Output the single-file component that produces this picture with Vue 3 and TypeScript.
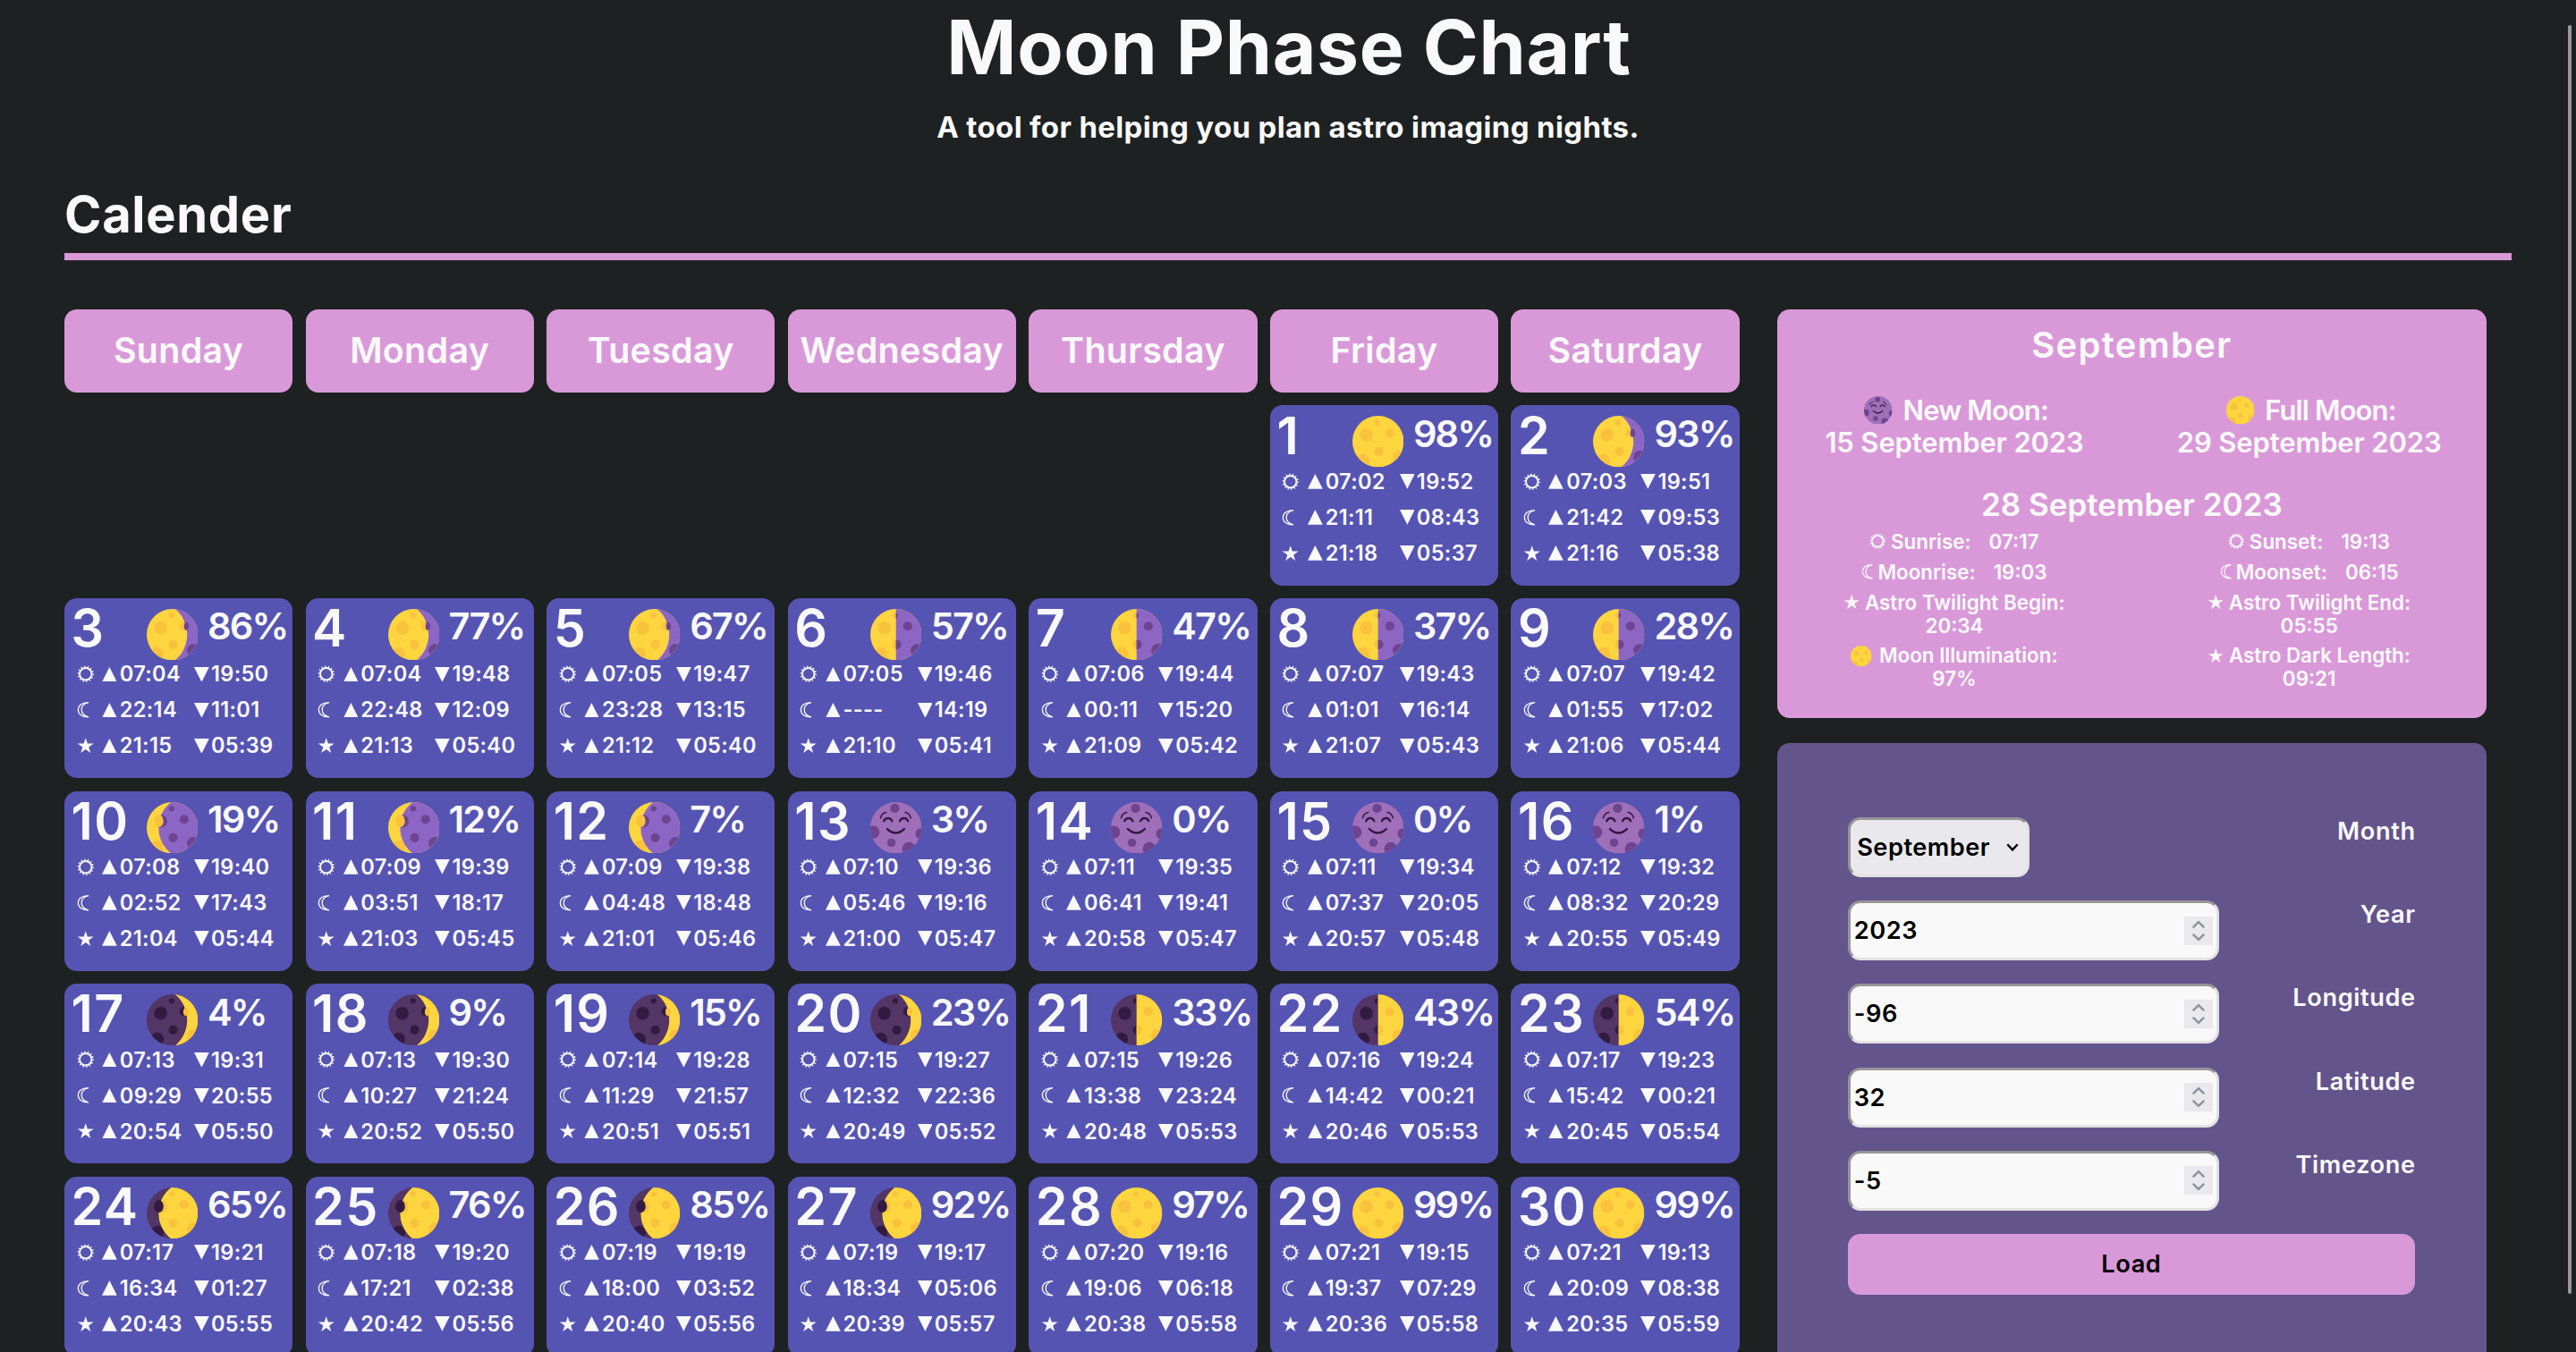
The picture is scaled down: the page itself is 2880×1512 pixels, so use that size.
<script setup lang="ts">
import { reactive } from 'vue'

type Phase = 'full' | 'new' | 'gibbous' | 'half' | 'crescent' | 'waxCrescent' | 'waxHalf' | 'waxGibbous'
type Glyph = 'sun' | 'moon' | 'star'

interface Day {
  date: number
  illumination: string
  phase: Phase
  rows: { glyph: Glyph; rise: string; set: string }[]
}

const weekdays = ['Sunday', 'Monday', 'Tuesday', 'Wednesday', 'Thursday', 'Friday', 'Saturday']

// date | illumination | sunrise sunset | moonrise moonset | twilight end, twilight begin
const table = `1 98% 07:02 19:52 21:11 08:43 21:18 05:37
2 93% 07:03 19:51 21:42 09:53 21:16 05:38
3 86% 07:04 19:50 22:14 11:01 21:15 05:39
4 77% 07:04 19:48 22:48 12:09 21:13 05:40
5 67% 07:05 19:47 23:28 13:15 21:12 05:40
6 57% 07:05 19:46 ---- 14:19 21:10 05:41
7 47% 07:06 19:44 00:11 15:20 21:09 05:42
8 37% 07:07 19:43 01:01 16:14 21:07 05:43
9 28% 07:07 19:42 01:55 17:02 21:06 05:44
10 19% 07:08 19:40 02:52 17:43 21:04 05:44
11 12% 07:09 19:39 03:51 18:17 21:03 05:45
12 7% 07:09 19:38 04:48 18:48 21:01 05:46
13 3% 07:10 19:36 05:46 19:16 21:00 05:47
14 0% 07:11 19:35 06:41 19:41 20:58 05:47
15 0% 07:11 19:34 07:37 20:05 20:57 05:48
16 1% 07:12 19:32 08:32 20:29 20:55 05:49
17 4% 07:13 19:31 09:29 20:55 20:54 05:50
18 9% 07:13 19:30 10:27 21:24 20:52 05:50
19 15% 07:14 19:28 11:29 21:57 20:51 05:51
20 23% 07:15 19:27 12:32 22:36 20:49 05:52
21 33% 07:15 19:26 13:38 23:24 20:48 05:53
22 43% 07:16 19:24 14:42 00:21 20:46 05:53
23 54% 07:17 19:23 15:42 00:21 20:45 05:54
24 65% 07:17 19:21 16:34 01:27 20:43 05:55
25 76% 07:18 19:20 17:21 02:38 20:42 05:56
26 85% 07:19 19:19 18:00 03:52 20:40 05:56
27 92% 07:19 19:17 18:34 05:06 20:39 05:57
28 97% 07:20 19:16 19:06 06:18 20:38 05:58
29 99% 07:21 19:15 19:37 07:29 20:36 05:58
30 99% 07:21 19:13 20:09 08:38 20:35 05:59`

function phaseOf(date: number): Phase {
  if (date === 1 || date >= 28) return 'full'
  if (date <= 5) return 'gibbous'
  if (date <= 9) return 'half'
  if (date <= 12) return 'crescent'
  if (date <= 16) return 'new'
  if (date <= 20) return 'waxCrescent'
  if (date <= 23) return 'waxHalf'
  return 'waxGibbous'
}

const days: Day[] = table.split('\n').map((line) => {
  const [date, illumination, ...t] = line.split(' ')
  const glyphs: Glyph[] = ['sun', 'moon', 'star']
  return {
    date: Number(date),
    illumination,
    phase: phaseOf(Number(date)),
    rows: glyphs.map((glyph, i) => ({ glyph, rise: t[i * 2], set: t[i * 2 + 1] })),
  }
})

const left: { glyph: Glyph | 'full'; label: string; value: string; stacked?: boolean }[] = [
  { glyph: 'sun', label: 'Sunrise:', value: '07:17' },
  { glyph: 'moon', label: 'Moonrise:', value: '19:03' },
  { glyph: 'star', label: 'Astro Twilight Begin:', value: '20:34', stacked: true },
  { glyph: 'full', label: 'Moon Illumination:', value: '97%', stacked: true },
]
const right: typeof left = [
  { glyph: 'sun', label: 'Sunset:', value: '19:13' },
  { glyph: 'moon', label: 'Moonset:', value: '06:15' },
  { glyph: 'star', label: 'Astro Twilight End:', value: '05:55', stacked: true },
  { glyph: 'star', label: 'Astro Dark Length:', value: '09:21', stacked: true },
]

const months = ['January', 'February', 'March', 'April', 'May', 'June', 'July', 'August', 'September', 'October', 'November', 'December']
const form = reactive({ month: 'September' })
const fields = reactive([
  { label: 'Year', value: '2023' },
  { label: 'Longitude', value: '-96' },
  { label: 'Latitude', value: '32' },
  { label: 'Timezone', value: '-5' },
])
</script>

<template>
  <div class="page">
    <svg class="defs" aria-hidden="true">
      <defs>
        <clipPath id="disc"><circle cx="50" cy="50" r="50" /></clipPath>
        <clipPath id="cut-wide"><path d="M54 -1 A64.8 64.8 0 0 1 54 101 L101 101 V-1 Z" /></clipPath>
        <clipPath id="cut-half"><path d="M50 -1 H101 V101 H50 Z" /></clipPath>
        <clipPath id="cut-thin"><path d="M49 -1 A63.3 63.3 0 0 0 49 101 L101 101 V-1 Z" /></clipPath>
        <g id="craters">
          <circle cx="27.2" cy="37" r="12.7" /><circle cx="48.5" cy="12.7" r="5.5" />
          <circle cx="72.8" cy="33.5" r="8.8" /><circle cx="51.5" cy="69.4" r="8.8" />
          <circle cx="91" cy="80.5" r="12.5" /><circle cx="20.6" cy="87.3" r="12.7" />
        </g>
        <g id="ph-full" clip-path="url(#disc)">
          <rect width="100" height="100" fill="#fdd53f" /><use href="#craters" fill="#f9c23c" />
        </g>
        <g id="ph-lilac" clip-path="url(#disc)">
          <rect width="100" height="100" fill="#8d65c5" /><use href="#craters" fill="#6d4490" />
        </g>
        <g id="ph-dark" clip-path="url(#disc)">
          <rect width="100" height="100" fill="#533566" /><use href="#craters" fill="#321b41" />
        </g>
        <g id="ph-gibbous">
          <use href="#ph-full" /><g clip-path="url(#cut-wide)"><use href="#ph-lilac" /></g>
          <ellipse cx="77.3" cy="33.8" rx="4.6" ry="7.4" fill="#6d4490" />
        </g>
        <g id="ph-half">
          <use href="#ph-full" /><g clip-path="url(#cut-half)"><use href="#ph-lilac" /></g>
        </g>
        <g id="ph-crescent">
          <use href="#ph-full" /><g clip-path="url(#cut-thin)"><use href="#ph-lilac" /></g>
          <ellipse cx="23.6" cy="37" rx="9" ry="12" fill="#f9c23c" />
        </g>
        <g id="ph-waxCrescent">
          <use href="#ph-dark" /><g clip-path="url(#cut-wide)"><use href="#ph-full" /></g>
          <ellipse cx="76.6" cy="34" rx="5.2" ry="8" fill="#f9c23c" />
        </g>
        <g id="ph-waxHalf">
          <use href="#ph-dark" /><g clip-path="url(#cut-half)"><use href="#ph-full" /></g>
        </g>
        <g id="ph-waxGibbous">
          <use href="#ph-dark" /><g clip-path="url(#cut-thin)"><use href="#ph-full" /></g>
          <ellipse cx="23.6" cy="37" rx="9.2" ry="12" fill="#321b41" />
        </g>
        <g id="ph-new">
          <g clip-path="url(#disc)">
            <rect width="100" height="100" fill="#a06fb9" />
            <g fill="#6d4490">
              <circle cx="48" cy="12" r="9" /><circle cx="5.5" cy="58.5" r="12.5" /><circle cx="41" cy="79" r="8.2" />
              <circle cx="75" cy="91" r="13" /><ellipse cx="97" cy="62" rx="9" ry="10.5" />
            </g>
          </g>
          <g fill="none" stroke="#321b41" stroke-linecap="round">
            <path stroke-width="2.8" d="M20 31 Q22 21.5 31 20 M68 20 Q77 21.5 79 31" />
            <path stroke-width="4.2" d="M26.5 37 Q29 31.5 34.5 31.5 T42.5 37 M57.5 37 Q60 31.5 65.5 31.5 T73.5 37 M33 52.5 Q49.5 68 66 52.5" />
          </g>
        </g>
        <g id="g-sun" fill="none" stroke="#f9f9f9">
          <circle cx="10" cy="10" r="6.9" stroke-width="2" />
          <circle cx="10" cy="10" r="8.6" stroke-width="1.7" stroke-dasharray="1.35 2.51" />
        </g>
        <g id="g-moon" fill="none" stroke="#f9f9f9" stroke-width="1.3">
          <path d="M13.4 1.7 C-2.6 1.2 -2.6 18.8 13.4 18.3 M13.4 1.7 C2.6 4.2 2.6 15.8 13.4 18.3" />
        </g>
        <path id="g-star" fill="#f9f9f9" d="M10 1.2 L12.15 7.75 H19.2 L13.5 11.75 L15.65 18.4 L10 14.3 L4.35 18.4 L6.5 11.75 L0.8 7.75 H7.85 Z" />
      </defs>
    </svg>

    <header class="masthead">
      <h1>Moon Phase Chart</h1>
      <p>A tool for helping you plan astro imaging nights.</p>
    </header>

    <h2>Calender</h2>

    <main>
      <section class="calendar">
        <div v-for="name in weekdays" :key="name" class="weekday">{{ name }}</div>
        <article v-for="day in days" :key="day.date" class="day" :class="{ first: day.date === 1 }">
          <div class="head">
            <span class="date">{{ day.date }}</span>
            <svg class="phase" viewBox="0 0 100 100"><use :href="'#ph-' + day.phase" /></svg>
            <span class="percent">{{ day.illumination }}</span>
          </div>
          <div v-for="row in day.rows" :key="row.glyph" class="row">
            <svg class="glyph" viewBox="0 0 20 20"><use :href="'#g-' + row.glyph" /></svg>
            <svg class="tri" viewBox="0 0 17 17"><path d="M8.5 0 L17 17 H0 Z" /></svg>
            <span>{{ row.rise }}</span>
            <svg class="tri" viewBox="0 0 17 17"><path d="M8.5 17 L17 0 H0 Z" /></svg>
            <span>{{ row.set }}</span>
          </div>
        </article>
      </section>

      <aside>
        <section class="summary">
          <h3>September</h3>
          <div class="pair events">
            <div>
              <div class="event"><svg viewBox="0 0 100 100"><use href="#ph-new" /></svg>New Moon:</div>
              <div class="when">15 September 2023</div>
            </div>
            <div>
              <div class="event"><svg viewBox="0 0 100 100"><use href="#ph-full" /></svg>Full Moon:</div>
              <div class="when">29 September 2023</div>
            </div>
          </div>
          <h4>28 September 2023</h4>
          <div class="pair">
            <div v-for="(column, i) in [left, right]" :key="i" class="details">
              <div v-for="item in column" :key="item.label" class="detail" :class="{ stacked: item.stacked }">
                <div class="label">
                  <svg v-if="item.glyph === 'full'" class="orb" viewBox="0 0 100 100"><use href="#ph-full" /></svg>
                  <svg v-else :class="['mark', item.glyph]" :viewBox="item.glyph === 'moon' ? '0 0 14 20' : '0 0 20 20'"><use :href="'#g-' + item.glyph" /></svg>
                  {{ item.label }}
                </div>
                <div>{{ item.value }}</div>
              </div>
            </div>
          </div>
        </section>

        <form class="settings" @submit.prevent>
          <div class="field">
            <div class="control select">
              <select id="month" v-model="form.month">
                <option v-for="m in months" :key="m">{{ m }}</option>
              </select>
              <svg class="chevron" viewBox="0 0 14 9"><path d="M1.3 1.2 L7 7.4 L12.7 1.2" /></svg>
            </div>
            <label for="month">Month</label>
          </div>
          <div v-for="field in fields" :key="field.label" class="field">
            <div class="control">
              <input :id="field.label" v-model="field.value" inputmode="numeric" />
              <span class="spinner">
                <svg viewBox="0 0 32 32"><path d="M10.4 11.6 L16 6.2 L21.6 11.6 M10.4 20.4 L16 25.8 L21.6 20.4" /></svg>
              </span>
            </div>
            <label :for="field.label">{{ field.label }}</label>
          </div>
          <button type="submit">Load</button>
        </form>
      </aside>
    </main>

    <div class="scrollbar"></div>
  </div>
</template>

<style>
body {
  margin: 0;
  background: #1e2122;
  overflow: hidden;
}
</style>

<style scoped>
* {
  box-sizing: border-box;
}
.page {
  position: relative;
  height: 1512px;
  overflow: hidden;
  padding: 2.7px 72px 0;
  background: #1e2122;
  color: #f9f9f9;
  font-family: Inter, 'Liberation Sans', sans-serif;
  font-weight: 600;
}
.defs {
  position: absolute;
  width: 0;
  height: 0;
}
h1,
h2,
h3,
h4,
p {
  margin: 0;
  white-space: nowrap;
}
.masthead {
  text-align: center;
}
h1 {
  padding-left: 2px;
  font-size: 84px;
  line-height: 100px;
  letter-spacing: 0.6px;
}
.masthead p {
  margin-top: 19.4px;
  font-size: 33px;
  line-height: 40px;
  font-weight: 700;
  letter-spacing: 0.35px;
}
h2 {
  margin-top: 42.7px;
  height: 86.2px;
  border-bottom: 8px solid #d999d9;
  font-size: 56px;
  line-height: 70px;
  letter-spacing: 0.7px;
}
main {
  display: flex;
  align-items: flex-start;
  gap: 42px;
  margin-top: 55px;
}
.calendar {
  display: grid;
  grid-template-columns: repeat(7, 255.2px);
  grid-template-rows: 93px;
  grid-auto-rows: 201.2px;
  gap: 14.4px;
}
.weekday {
  border-radius: 14px;
  background: #d999d9;
  text-align: center;
  font-size: 39.4px;
  line-height: 93px;
  letter-spacing: 0.3px;
}
.day {
  border-radius: 14px;
  background: #5654b2;
}
.first {
  grid-column: 6;
}
.head {
  display: grid;
  grid-template-columns: 84.5px 68px 1fr;
  align-items: start;
  height: 65px;
  padding-left: 7.5px;
  white-space: nowrap;
}
.date {
  padding-top: 3.2px;
  font-size: 57.4px;
  line-height: 60px;
  letter-spacing: 1.4px;
}
.phase {
  width: 57.4px;
  height: 57.4px;
  margin-top: 12px;
}
.percent {
  padding-top: 6.5px;
  font-size: 41.6px;
  line-height: 50px;
  letter-spacing: -1.9px;
}
.row {
  display: grid;
  grid-template-columns: 28.4px 19.8px 83px 19.2px 1fr;
  align-items: center;
  height: 40px;
  padding-left: 13.6px;
  font-size: 23.6px;
  letter-spacing: 0.3px;
}
.glyph {
  width: 19.5px;
  height: 19.5px;
}
.tri {
  width: 16.8px;
  height: 16.8px;
  fill: #f9f9f9;
}
aside {
  width: 793.4px;
}
.summary {
  height: 456.7px;
  padding-top: 16px;
  border-radius: 14px;
  background: #d999d9;
  text-align: center;
}
h3 {
  font-size: 40px;
  line-height: 48px;
  font-weight: 600;
  letter-spacing: 1.3px;
}
.pair {
  display: grid;
  grid-template-columns: 1fr 1fr;
}
.events {
  margin-top: 31px;
  font-size: 31px;
  line-height: 36px;
}
.event {
  display: flex;
  justify-content: center;
  align-items: center;
  gap: 12px;
  padding-left: 4px;
  letter-spacing: -0.9px;
}
.event svg {
  width: 31.5px;
  height: 31.5px;
}
.when {
  letter-spacing: -0.15px;
}
h4 {
  margin-top: 27.4px;
  font-size: 35px;
  line-height: 48px;
  font-weight: 600;
  letter-spacing: 0;
}
.details {
  display: flex;
  flex-direction: column;
  gap: 7.9px;
  margin-top: 4.4px;
  font-size: 22.4px;
  line-height: 26px;
  letter-spacing: 0;
}
.detail {
  display: flex;
  justify-content: center;
  gap: 20px;
}
.detail.stacked {
  flex-direction: column;
  align-items: center;
  gap: 0;
}
.label {
  display: flex;
  align-items: center;
  gap: 5px;
}
.mark {
  width: 18.5px;
  height: 18.5px;
}
.mark.moon {
  width: 13px;
}
.orb {
  width: 23.5px;
  height: 23.5px;
  margin-right: 3px;
}
.settings {
  display: flex;
  flex-direction: column;
  gap: 26.2px;
  height: 760px;
  margin-top: 28.3px;
  padding: 83px 80px 0 79px;
  border-radius: 14px;
  background: #64548c;
  font-size: 27.2px;
  letter-spacing: 0.6px;
}
.field {
  display: flex;
  justify-content: space-between;
  align-items: flex-start;
  height: 67px;
}
.field label {
  line-height: 32.6px;
  margin-right: -0.6px;
}
.control {
  display: flex;
  align-items: center;
  width: 415px;
  height: 67px;
  padding-right: 4px;
  border: 3px solid;
  border-color: #969696 #e2e2e2 #e2e2e2 #969696;
  border-radius: 14px;
  background: #f9f9f9;
}
.control.select {
  width: 203px;
  padding-right: 8.5px;
  background: #e9e9ed;
}
input,
select {
  flex: 1;
  min-width: 0;
  margin: 0;
  padding: 0 0 0 4px;
  border: 0;
  outline: 0;
  background: none;
  color: #000;
  font: inherit;
  letter-spacing: 0.6px;
}
select {
  appearance: none;
  padding-left: 7.5px;
  letter-spacing: 0.5px;
}
.chevron {
  width: 14px;
  height: 9px;
  fill: none;
  stroke: #000;
  stroke-width: 2.4;
}
.spinner {
  width: 32px;
  height: 32px;
  background: #e9e9ed;
}
.spinner svg {
  display: block;
  fill: none;
  stroke: #8f8f9d;
  stroke-width: 2.4;
  stroke-linecap: round;
}
button {
  flex: none;
  height: 68px;
  padding: 0;
  border: 0;
  border-radius: 14px;
  background: #d999d9;
  color: #000;
  font: inherit;
  letter-spacing: 0.6px;
}
.scrollbar {
  position: absolute;
  top: 28px;
  left: 2871px;
  width: 4px;
  height: 1419px;
  border-radius: 2px;
  background: #979797;
}
</style>
